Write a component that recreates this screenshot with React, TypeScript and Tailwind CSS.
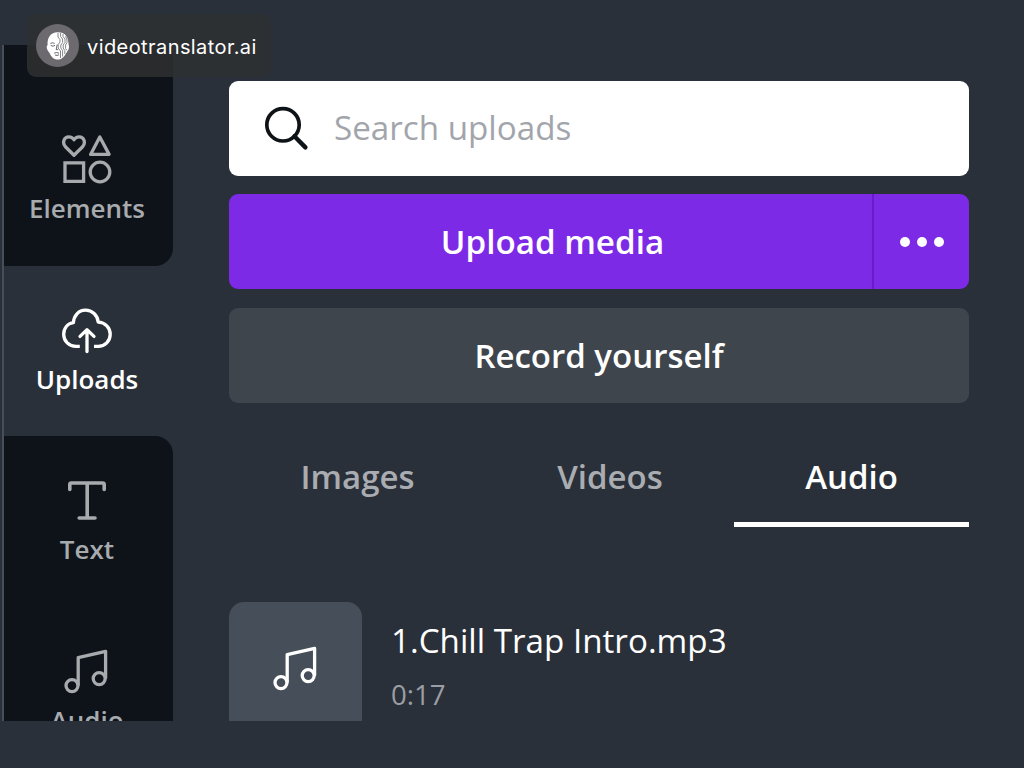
import type { ReactNode } from "react";

function ElementsIcon() {
  return (
    <svg className="block" width="52" height="52" viewBox="0 0 52 52" fill="none" stroke="currentColor" strokeWidth="3.3" strokeLinejoin="round">
      <path d="M13 21.2 L4.4 12.8 C0.9 8.6 3 2.8 7.8 2.8 C10.4 2.8 12 4 13 5.8 C14 4 15.6 2.8 18.2 2.8 C23 2.8 25.1 8.6 21.6 12.8 Z" />
      <path d="M38.8 3 L48.1 20.4 H29.6 Z" />
      <path d="M4 28.8 H22.6 V47.4 H4 Z" strokeLinejoin="miter" />
      <circle cx="39" cy="38" r="9.8" />
    </svg>
  );
}

function UploadIcon() {
  return (
    <svg className="block" width="52" height="52" viewBox="0 0 52 52" fill="none" stroke="currentColor" strokeWidth="3.3" strokeLinecap="round" strokeLinejoin="round">
      <path strokeLinecap="butt" d="M18.8 41.3 H15 C8 41.3 2.7 36 2.7 29.4 C2.7 23.2 6.6 18.6 12.4 17.7 C12.8 10.6 17.6 5.2 24.4 5.2 C31.2 5.2 36.6 10.2 37.2 17.2 C44.2 17.4 49.2 22.8 49.2 29.2 C49.2 36 44 41.3 37.2 41.3 H33" />
      <path d="M26 46.6 V26 M19 31.4 L26 24.8 L33 31.4" />
    </svg>
  );
}

function TextIcon() {
  return (
    <svg className="block" width="52" height="52" viewBox="0 0 52 52" fill="none" stroke="currentColor" strokeWidth="3.6" strokeLinecap="round" strokeLinejoin="round">
      <path d="M8.8 14.4 V9.6 Q8.8 8 10.4 8 H41.6 Q43.2 8 43.2 9.6 V14.4 M26.2 8 V42.6 M18.2 43 H34" />
    </svg>
  );
}

function NoteIcon() {
  return (
    <svg className="block" width="52" height="52" viewBox="0 0 52 52" fill="none" stroke="currentColor" strokeWidth="3.3" strokeLinejoin="round">
      <circle cx="11" cy="39.6" r="6" />
      <circle cx="38.2" cy="32.6" r="6" />
      <path d="M17.2 39.6 V11.6 L44.6 5.4 V32.6" />
    </svg>
  );
}

function FaceLogo() {
  return (
    <svg className="block h-[43px] w-[43px]" viewBox="0 0 43 43" fill="none">
      <circle cx="21.5" cy="21.5" r="21.5" fill="#6c6a6e" />
      <path d="M21.5 8.2 C27.5 8 31 11 32 16 L33 23 C33 26 31 27.5 30 29.5 C27.5 33.5 25.5 35.5 21.5 35.5 C17.5 35.5 15.5 33 13.5 29 C12 27 10.5 25 10.7 22.5 L11.6 21 C11.2 14 14 8.5 21.5 8.2 Z" fill="#fff" />
      <path d="M14.4 19.4 Q16.4 18.2 18.6 19.4 M14.8 21.4 Q16.8 23 19 21.4 M21.2 20.5 L20.2 25.6 H22 M18.2 29.2 Q20.5 27.8 23 29.2 M19 31 Q21 32 23 30.8" stroke="#57555b" strokeWidth="0.9" />
      <path d="M22 9 V13 L24 15.5 V18 L22.2 20.5 V24 L24.5 27 V34 M24.6 9 V12.5 L26.6 15 V18.5 L24.8 21 V24 L26.6 26.5 V32.5 M27 10 V12.5 L29 15 V18.5 L27.2 21 V24 L28.8 26.5 V30 M29.6 12 L31 16 V18.5 L29.6 21 V24.5 L31 26.5" stroke="#66646a" strokeWidth="0.8" />
    </svg>
  );
}

function RailItem({ icon, label, className }: { icon: ReactNode; label: string; className: string }) {
  return (
    <div className={`flex h-[171px] w-[166px] shrink-0 flex-col items-center pt-[39px] ${className}`}>
      {icon}
      <span className="mt-[4px] text-[26px] leading-9 font-semibold">{label}</span>
    </div>
  );
}

function Rail() {
  return (
    <nav className="flex w-[173px] shrink-0 flex-col overflow-hidden border-l-2 border-[#484e57]">
      <div className="flex h-[221px] w-[169px] shrink-0 items-end rounded-br-[18px] bg-[#0e131a] text-[#a8abae]">
        <RailItem icon={<ElementsIcon />} label="Elements" className="" />
      </div>
      <RailItem icon={<UploadIcon />} label="Uploads" className="text-white" />
      <div className="-mt-px w-[169px] shrink-0 rounded-tr-[18px] bg-[#0e131a] text-[#a8abae]">
        <RailItem icon={<TextIcon />} label="Text" className="" />
        <RailItem icon={<NoteIcon />} label="Audio" className="" />
      </div>
    </nav>
  );
}

export default function App() {
  return (
    <div className="relative h-[768px] w-[1024px] overflow-hidden bg-[#2a3039] pt-[45px] pl-[2px] font-['Open_Sans',sans-serif]">
      <div className="flex h-[676px] overflow-hidden">
        <Rail />
        <main className="ml-[54px] w-[740px] shrink-0 pt-9">
          <div className="flex h-[95px] items-center rounded-[9px] bg-white pl-[35px]">
            <svg className="block" width="45" height="45" viewBox="0 0 45 45" fill="none" stroke="#0e1318" strokeWidth="3.7">
              <circle cx="19" cy="18.8" r="16.2" />
              <path d="M30.4 30.2 L41.4 41.4" strokeWidth="4.4" strokeLinecap="round" />
            </svg>
            <span className="-mt-[2px] ml-[25px] text-[33.2px] leading-none text-[#a2a5ab]">Search uploads</span>
          </div>
          <div className="mt-[18px] flex h-[95px] overflow-hidden rounded-[9px] bg-[#7d2ae7] text-white">
            <button className="w-[643px] border-0 pl-[4px] text-[33.2px] leading-none font-semibold">Upload media</button>
            <button className="flex flex-1 items-center justify-center gap-[7px] border-l-2 border-[#6a1bd0]">
              <span className="size-[10px] rounded-full bg-white" />
              <span className="size-[10px] rounded-full bg-white" />
              <span className="size-[10px] rounded-full bg-white" />
            </button>
          </div>
          <button className="mt-[19px] block h-[95px] w-full rounded-[9px] bg-[#3f454c] text-[33px] leading-none font-semibold text-white">Record yourself</button>
          <div className="mt-[27px] flex h-[97px] text-[33px] font-semibold text-[#a9acb0]">
            <div className="w-[257px] pt-[23px] text-center leading-[48px]">Images</div>
            <div className="w-[248px] pt-[23px] text-center leading-[48px]">Videos</div>
            <div className="w-[235px] border-b-[5px] border-white pt-[23px] text-center leading-[48px] text-white">Audio</div>
          </div>
          <div className="mt-[75px] flex">
            <div className="flex size-[133px] items-center justify-center rounded-[15px] bg-[#454e59] text-white">
              <NoteIcon />
            </div>
            <div className="ml-[29px] pt-[15px]">
              <div className="text-[33.2px] leading-[48px] text-white">1.Chill Trap Intro.mp3</div>
              <div className="mt-[9px] text-[27.6px] leading-10 text-[#9b9ea5]">0:17</div>
            </div>
          </div>
        </main>
      </div>
      <div className="absolute top-[14px] left-[27px] flex h-[63px] w-[244px] items-center rounded-[9px] bg-[#2e3031]/85 pl-[9px]">
        <FaceLogo />
        <span className="mt-[2px] ml-[8px] font-['Inter',sans-serif] text-[20px] tracking-[0.42px] whitespace-nowrap text-white">videotranslator.ai</span>
      </div>
    </div>
  );
}
